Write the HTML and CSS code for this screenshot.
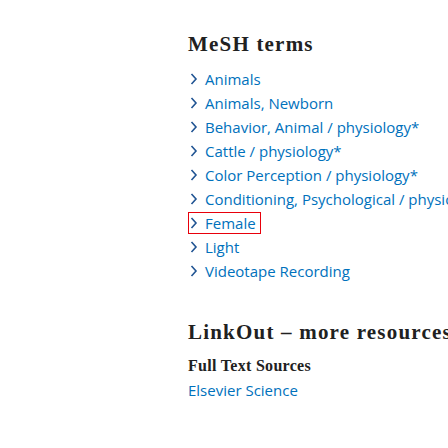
FILE: index.html
```html
<!DOCTYPE html>
<html>
<head>
<meta charset="utf-8">
<link rel="stylesheet" href="styles.css">
</head>
<body>
<main class="page">
  <section class="section mesh">
    <h2 class="heading">MeSH terms</h2>
    <ul class="terms">
      <li><a class="term" href="#"><svg class="chev" viewBox="0 0 8 14"><path d="M1.5 2 L6 7 L1.5 12"/></svg><span>Animals</span></a></li>
      <li><a class="term" href="#"><svg class="chev" viewBox="0 0 8 14"><path d="M1.5 2 L6 7 L1.5 12"/></svg><span>Animals, Newborn</span></a></li>
      <li><a class="term" href="#"><svg class="chev" viewBox="0 0 8 14"><path d="M1.5 2 L6 7 L1.5 12"/></svg><span>Behavior, Animal / physiology*</span></a></li>
      <li><a class="term" href="#"><svg class="chev" viewBox="0 0 8 14"><path d="M1.5 2 L6 7 L1.5 12"/></svg><span>Cattle / physiology*</span></a></li>
      <li><a class="term" href="#"><svg class="chev" viewBox="0 0 8 14"><path d="M1.5 2 L6 7 L1.5 12"/></svg><span>Color Perception / physiology*</span></a></li>
      <li><a class="term" href="#"><svg class="chev" viewBox="0 0 8 14"><path d="M1.5 2 L6 7 L1.5 12"/></svg><span>Conditioning, Psychological / physiology*</span></a></li>
      <li><a class="term focused" href="#"><svg class="chev" viewBox="0 0 8 14"><path d="M1.5 2 L6 7 L1.5 12"/></svg><span>Female</span></a></li>
      <li><a class="term" href="#"><svg class="chev" viewBox="0 0 8 14"><path d="M1.5 2 L6 7 L1.5 12"/></svg><span>Light</span></a></li>
      <li><a class="term" href="#"><svg class="chev" viewBox="0 0 8 14"><path d="M1.5 2 L6 7 L1.5 12"/></svg><span>Videotape Recording</span></a></li>
    </ul>
  </section>
  <section class="section linkout">
    <h2 class="heading">LinkOut – more resources</h2>
    <h3 class="subheading">Full Text Sources</h3>
    <a class="link" href="#">Elsevier Science</a>
  </section>
</main>
</body>
</html>
```
FILE: styles.css
```css
html, body {
  margin: 0;
  padding: 0;
  background: #ffffff;
  overflow: hidden;
}
.page {
  padding: 30px 0 0 188px;
  width: 600px;
  font-family: "Open Sans", sans-serif;
}
.section {
  display: flex;
  flex-direction: column;
  align-items: flex-start;
}
.heading {
  margin: 0;
  font-family: "Liberation Serif", serif;
  font-weight: bold;
  font-size: 21px;
  letter-spacing: 1.2px;
  line-height: 28px;
  color: #212121;
  white-space: nowrap;
}
.terms {
  list-style: none;
  margin: 10px 0 0 0;
  padding: 0;
}
.terms li {
  height: 24px;
  display: flex;
  align-items: flex-start;
}
.term {
  display: inline-flex;
  align-items: center;
  gap: 7px;
  color: #0071bc;
  text-decoration: none;
  font-size: 15px;
  line-height: 20px;
  white-space: nowrap;
  border: 1px solid transparent;
  padding: 0 4px 0 1px;
}
.term.focused {
  border-color: #e8000b;
}
.chev {
  width: 8px;
  height: 14px;
  fill: none;
  stroke: #205493;
  stroke-width: 1.6;
}
.linkout {
  margin-top: 34px;
}
.subheading {
  margin: 10px 0 0 0;
  font-family: "Liberation Serif", serif;
  font-weight: bold;
  font-size: 16px;
  letter-spacing: 0.3px;
  line-height: 20px;
  color: #212121;
}
.link {
  margin-top: 4px;
  color: #0071bc;
  text-decoration: none;
  font-size: 15px;
  line-height: 20px;
}
```
